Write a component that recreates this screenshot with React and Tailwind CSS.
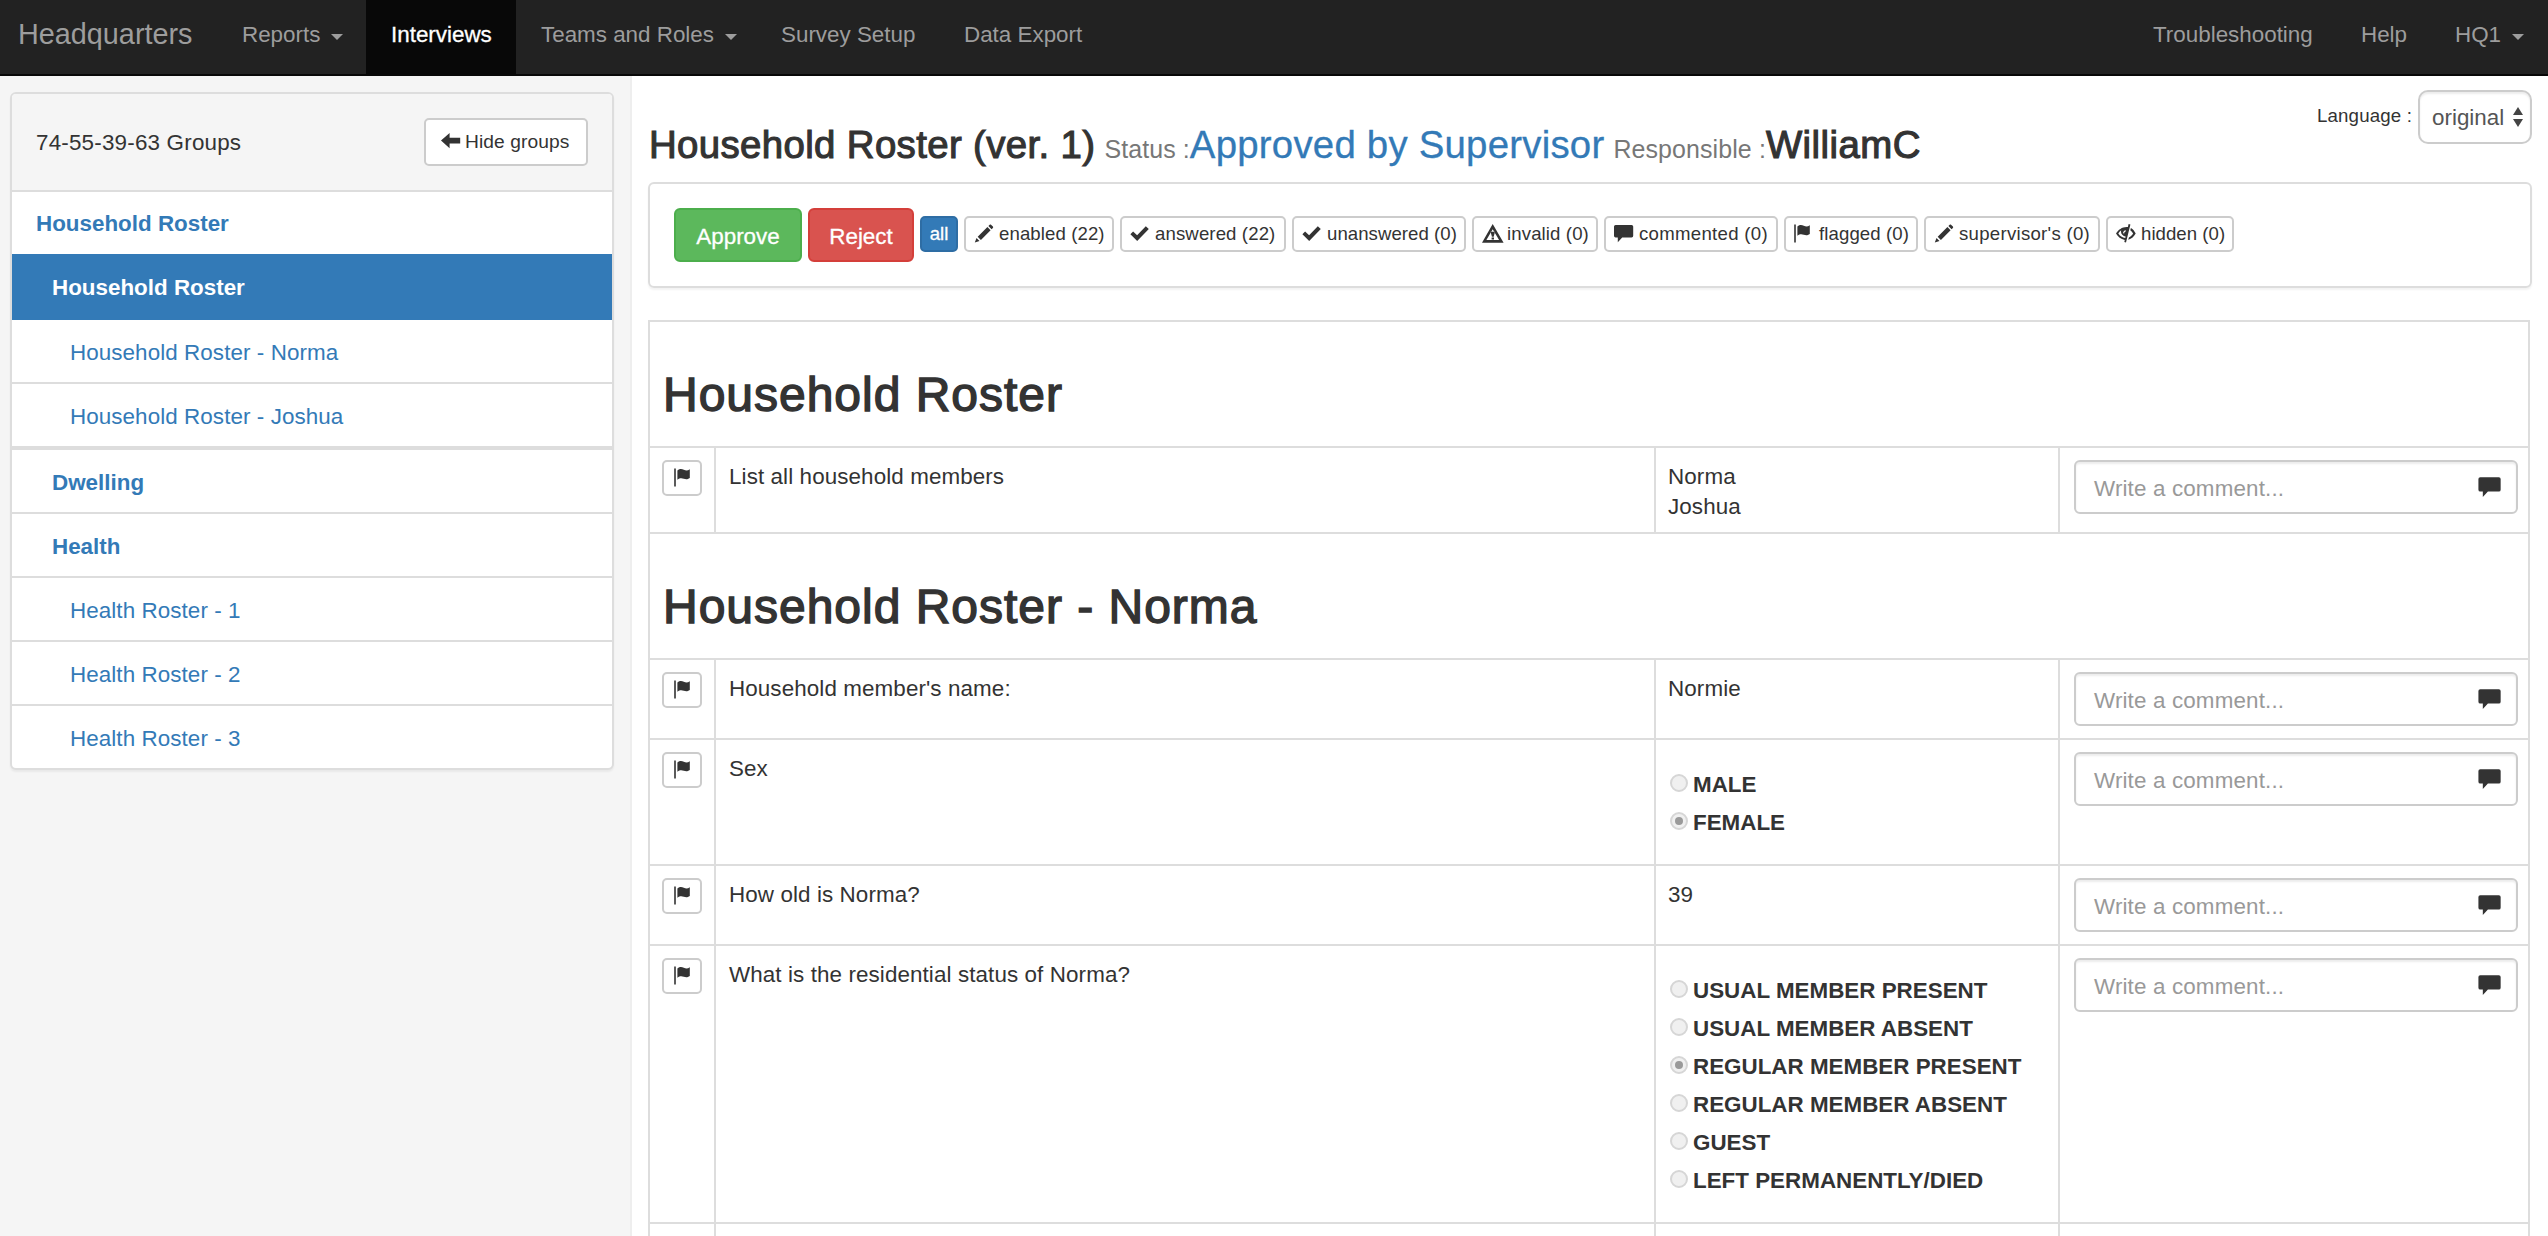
import React from "react";

const ICONS = {
  arrow: <path d="M0 8.600 8.600 1v4.800H19.200v5.600H8.600v4.800z" />,
  pencil: (
    <path d="M15.700.7c.4-.4.900-.4 1.300 0l1.900 1.900c.4.4.4.900 0 1.300l-1.300 1.300-3.200-3.200zM13.400 3l3.200 3.200-9.700 9.800-3.200-3.200zM2.500 13.900l3 3-4.700 1.700z" />
  ),
  ok: <path d="M.4 10.300l2.700-2.700 4 3.700L15.800 2.300l3 2.800L7.200 17z" />,
  warning: (
    <path
      fillRule="evenodd"
      d="M10.700 0 21.600 18.700H0zM10.700 5.200 4.400 15.900h12.700zM8.600 7.800h4.400l-1.300 4.900h-1.800zM9.600 13.400h2.400v2.200h-2.400z"
    />
  ),
  comment: (
    <path d="M1.600 1h16a1.600 1.600 0 0 1 1.600 1.600v9.200a1.600 1.600 0 0 1-1.600 1.600H8.200l-4.400 4.800v-4.800H1.600A1.600 1.600 0 0 1 0 11.800V2.600A1.600 1.600 0 0 1 1.600 1z" />
  ),
  flag: (
    <path d="M.2.600h1.600V18.600H.2zM3.400 2.400c2.600-1.800 4.400-1.400 6.400-.6 2.400 1 4 .8 6-.6v8.800c-2.400 1.600-4 1.400-6 .8-2.400-.8-4-.8-6.400 1z" />
  ),
  eye: (
    <>
      <path
        fillRule="evenodd"
        d="M12.600 0l1.800.4-4.400 18-1.700-.4.500-2.100C4.800 15.200 2 12.800 0 9.500 2.200 5.700 6 2.900 10.600 2.900c.4 0 .8 0 1.300.1zM5.200 6.200C4 7.200 3 8.400 2.300 9.500c1.600 2.400 4 4 7 4.500l.3-1.400c-2.600-.6-4.600-2.400-4.600-4.800 0-.6 0-1.100.2-1.600zM9.800 6.200c-1.700.2-2.800 1.500-2.700 3l1.100.2c0-1 .6-1.800 1.500-2z"
      />
      <path d="M14.900 3.900c2.100 1.200 3.700 3.200 4.800 5.600-1.600 3-4.200 5.400-7.400 6.300l.6-2.400c1.800-.8 3.200-2.200 4.200-3.900-.7-1.300-1.600-2.400-2.800-3.300z" />
    </>
  ),
};

function Icon({ name, className = "" }) {
  return (
    <svg viewBox="0 0 20 19" className={"h-[19px] w-[20px] shrink-0 overflow-visible fill-[#333] " + className}>
      {ICONS[name]}
    </svg>
  );
}

function Caret() {
  return (
    <svg viewBox="0 0 12 6" className="mt-[4px] ml-[11px] h-[6px] w-[12px] fill-[#9d9d9d]">
      <path d="M0 0h12L6 6z" />
    </svg>
  );
}

function NavItem({ label, caret, active, className }) {
  return (
    <a
      className={
        "flex h-[74px] items-center pb-[5px] pl-[25px] " +
        (active ? "bg-[#080808] text-white [-webkit-text-stroke:0.3px_white] " : "text-[#9d9d9d] ") +
        className
      }
    >
      {label}
      {caret && <Caret />}
    </a>
  );
}

const GROUPS = [
  { label: "Household Roster", cls: "h-[62px] pl-6 font-bold text-[#337ab7] pt-[1px]" },
  { label: "Household Roster", cls: "h-[66px] pl-[40px] font-bold text-white bg-[#337ab7] pt-[2px]" },
  { label: "Household Roster - Norma", cls: "h-16 pt-[3px] pl-[58px] text-[#337ab7] border-b-2 tracking-[0.08px]" },
  { label: "Household Roster - Joshua", cls: "h-[66px] pt-[3px] pl-[58px] text-[#337ab7] border-b-4 tracking-[0.08px]" },
  { label: "Dwelling", cls: "h-16 pt-[3px] pl-[40px] font-bold text-[#337ab7] border-b-2" },
  { label: "Health", cls: "h-16 pt-[3px] pl-[40px] font-bold text-[#337ab7] border-b-2" },
  { label: "Health Roster - 1", cls: "h-16 pt-[3px] pl-[58px] text-[#337ab7] border-b-2 tracking-[0.08px]" },
  { label: "Health Roster - 2", cls: "h-16 pt-[3px] pl-[58px] text-[#337ab7] border-b-2 tracking-[0.08px]" },
  { label: "Health Roster - 3", cls: "h-[62px] pt-[3px] pl-[58px] text-[#337ab7] tracking-[0.08px]" },
];

const FILTERS = [
  { icon: "pencil", label: "enabled (22)", cls: "w-[150px] tracking-[0.1px]" },
  { icon: "ok", label: "answered (22)", cls: "w-[166px] tracking-[0.12px]" },
  { icon: "ok", label: "unanswered (0)", cls: "w-[174px] tracking-[0.05px]" },
  { icon: "warning", label: "invalid (0)", cls: "w-[126px] tracking-[0.12px]" },
  { icon: "comment", label: "commented (0)", cls: "w-[174px] tracking-[0.3px]" },
  { icon: "flag", label: "flagged (0)", cls: "w-[134px] tracking-[0.1px]" },
  { icon: "pencil", label: "supervisor's (0)", cls: "w-[176px] tracking-[0.28px]" },
  { icon: "eye", label: "hidden (0)", cls: "w-[128px] tracking-[0.05px]" },
];

function Sidebar() {
  return (
    <aside className="w-[632px] shrink-0 border-r-2 border-[#eee] bg-[#f5f5f5] pt-4 pl-[10px]">
      <div className="w-[604px] overflow-hidden rounded-md border-2 border-[#ddd] bg-white shadow-[0_2px_2px_rgba(0,0,0,0.05)]">
        <div className="flex h-[98px] items-center justify-between border-b-2 border-[#ddd] bg-[#f5f5f5] pr-6 pl-6">
          <span className="pt-[2px] tracking-[0.2px]">74-55-39-63 Groups</span>
          <button className="flex h-12 w-[164px] items-center rounded-[5px] border-2 border-[#ccc] bg-white pb-[1px] pl-[15px] text-[19.2px] tracking-[0.1px]">
            <Icon name="arrow" className="mr-[4px]" />
            Hide groups
          </button>
        </div>
        {GROUPS.map((g, i) => (
          <div key={i} className={"flex items-center border-[#ddd] " + g.cls}>
            {g.label}
          </div>
        ))}
      </div>
    </aside>
  );
}

function TitleBar() {
  return (
    <div className="flex h-[106px] justify-between">
      <h3 className="flex items-baseline pt-[48px] pl-[1px] text-[38.4px] leading-[42px] whitespace-pre">
        <span className="tracking-[0.36px] [-webkit-text-stroke:1.1px_#333]">Household Roster (ver. 1)</span>
        <span className="ml-[9px] text-[24.96px] tracking-[0.1px] text-[#777]">Status :</span>
        <span className="tracking-[0.22px] text-[#337ab7] [-webkit-text-stroke:0.3px_#337ab7]">Approved by Supervisor</span>
        <span className="ml-[9px] text-[24.96px] tracking-[0.1px] text-[#777]">Responsible :</span>
        <span className="tracking-[0.45px] [-webkit-text-stroke:1.1px_#333]">WilliamC</span>
      </h3>
      <div className="flex pt-[14px]">
        <span className="mt-3 mr-[6px] text-[18.7px] leading-[28px] tracking-[0.15px]">Language :</span>
        <div className="flex h-[54px] w-[114px] items-center rounded-[10px] border-2 border-[#ccc] bg-white pt-[2px] pl-[12px] text-[#555] shadow-[inset_0_2px_2px_rgba(0,0,0,0.075)]">
          original
          <svg viewBox="0 0 10 20" className="-mt-[2px] ml-[9px] h-5 w-[10px] fill-[#444]">
            <path d="M5 0l5 8H0zM0 12h10l-5 8z" />
          </svg>
        </div>
      </div>
    </div>
  );
}

function Toolbar() {
  return (
    <div className="flex h-[106px] gap-[6px] rounded-md border-2 border-[#ddd] pt-6 pl-6 text-[18.6px] shadow-[0_2px_2px_rgba(0,0,0,0.05)]">
      <button className="h-[54px] w-32 rounded-md border-2 border-[#4cae4c] bg-[#5cb85c] pt-[3px] text-[22.4px] text-white [-webkit-text-stroke:0.3px_white]">
        Approve
      </button>
      <button className="h-[54px] w-[106px] rounded-md border-2 border-[#d43f3a] bg-[#d9534f] pt-[3px] text-[22.4px] text-white [-webkit-text-stroke:0.3px_white]">
        Reject
      </button>
      <button className="mt-2 h-9 w-[38px] rounded-[5px] border-2 border-[#2e6da4] bg-[#337ab7] leading-[30px] text-white [-webkit-text-stroke:0.3px_white]">
        all
      </button>
      {FILTERS.map((f) => (
        <button
          key={f.label}
          className={
            "mt-2 flex h-9 items-center rounded-[5px] border-2 border-[#ccc] bg-white pb-[1px] pl-2 whitespace-nowrap " +
            f.cls
          }
        >
          <Icon name={f.icon} className="mr-[5px]" />
          {f.label}
        </button>
      ))}
    </div>
  );
}

function Heading({ children }) {
  return (
    <div className="flex h-[126px] items-end border-b-2 border-[#ddd] pb-[23px] pl-[13px] text-[48px] leading-[56px] tracking-[0.98px] [-webkit-text-stroke:1.4px_#333]">
      {children}
    </div>
  );
}

function Option({ label, checked }) {
  return (
    <div className="flex h-[38px] items-center font-bold">
      <span className="-mt-[3px] mr-[5px] ml-[2px] flex h-[18px] w-[18px] items-center justify-center rounded-full border-2 border-[#d6d6d6] bg-[#f0f0f0]">
        {checked && <span className="h-2 w-2 rounded-full bg-[#9a9a9a]" />}
      </span>
      <span className="pt-[2px]">{label}</span>
    </div>
  );
}

function Question({ text, answers, options, cls }) {
  return (
    <div className={"grid grid-cols-[66px_940px_404px_468px] border-b-2 border-[#ddd] " + cls}>
      <div className="border-r-2 border-[#ddd] pt-3 pl-3">
        <button className="flex h-9 w-10 items-start rounded-[5px] border-2 border-[#ccc] pt-[6px] pl-[10px]">
          <Icon name="flag" />
        </button>
      </div>
      <div className="border-r-2 border-[#ddd] pt-[13px] pl-[13px] tracking-[0.1px]">{text}</div>
      <div className="border-r-2 border-[#ddd] pl-3">
        {answers && (
          <div className="pt-[14px] leading-[30px] tracking-[0.1px]">
            {answers.map((a) => (
              <div key={a}>{a}</div>
            ))}
          </div>
        )}
        {options && (
          <div className="pt-[25px]">
            {options.map((o) => (
              <Option key={o.label} {...o} />
            ))}
          </div>
        )}
      </div>
      <div className="pt-3 pl-[14px]">
        <div className="flex h-[54px] w-[444px] items-center justify-between rounded-md border-2 border-[#ccc] pr-[14px] pl-[18px] text-[#999] shadow-[inset_0_2px_2px_rgba(0,0,0,0.075)]">
          <span className="mt-[3px] tracking-[0.15px]">Write a comment...</span>
          <Icon name="comment" className="h-[22px]! w-[24px]!" />
        </div>
      </div>
    </div>
  );
}

export default function App() {
  return (
    <div className="flex h-[1236px] w-[2548px] flex-col overflow-hidden bg-white font-['Liberation_Sans',Arial,sans-serif] text-[22.4px] leading-[32px] text-[#333]">
      <nav className="flex h-[76px] shrink-0 border-b-2 border-[#080808] bg-[#222]">
        <div className="flex h-[74px] w-[217px] items-center pb-[6px] pl-[18px] text-[28.8px] text-[#9d9d9d]">
          Headquarters
        </div>
        <NavItem label="Reports" caret className="w-[149px]" />
        <NavItem label="Interviews" active className="w-[150px]" />
        <NavItem label="Teams and Roles" caret className="w-[240px]" />
        <NavItem label="Survey Setup" className="w-[183px]" />
        <NavItem label="Data Export" className="w-[180px]" />
        <div className="ml-auto flex">
          <NavItem label="Troubleshooting" className="w-[208px]" />
          <NavItem label="Help" className="w-[94px]" />
          <NavItem label="HQ1" caret className="w-[118px]" />
        </div>
      </nav>
      <div className="flex min-h-0 flex-1">
        <Sidebar />
        <main className="min-w-0 flex-1 pr-4 pl-4">
          <TitleBar />
          <Toolbar />
          <div className="mt-8 w-[1882px] border-2 border-[#ddd]">
            <Heading>Household Roster</Heading>
            <Question cls="h-[86px]" text="List all household members" answers={["Norma", "Joshua"]} />
            <Heading>Household Roster - Norma</Heading>
            <Question cls="h-[80px]" text="Household member's name:" answers={["Normie"]} />
            <Question cls="h-[126px]" text="Sex" options={[{ label: "MALE" }, { label: "FEMALE", checked: true }]} />
            <Question cls="h-[80px]" text="How old is Norma?" answers={["39"]} />
            <Question
              cls="h-[278px]"
              text="What is the residential status of Norma?"
              options={[
                { label: "USUAL MEMBER PRESENT" },
                { label: "USUAL MEMBER ABSENT" },
                { label: "REGULAR MEMBER PRESENT", checked: true },
                { label: "REGULAR MEMBER ABSENT" },
                { label: "GUEST" },
                { label: "LEFT PERMANENTLY/DIED" },
              ]}
            />
            <div className="grid h-20 grid-cols-[66px_940px_404px_468px]">
              <div className="border-r-2 border-[#ddd]" />
              <div className="border-r-2 border-[#ddd]" />
              <div className="border-r-2 border-[#ddd]" />
            </div>
          </div>
        </main>
      </div>
    </div>
  );
}
